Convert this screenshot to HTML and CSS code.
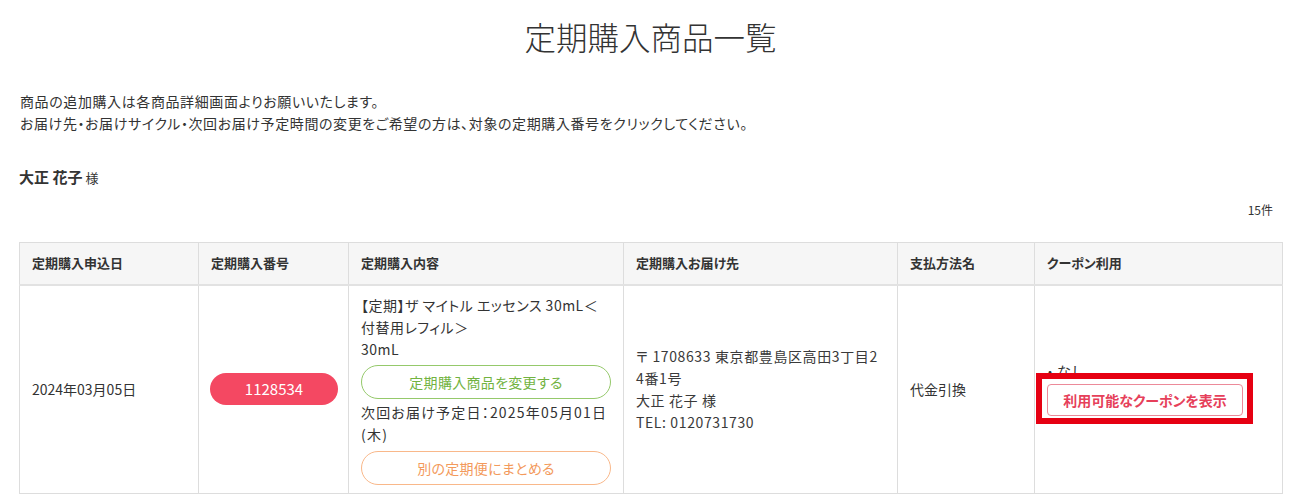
FILE: index.html
```html
<!DOCTYPE html>
<html lang="ja">
<head>
<meta charset="utf-8">
<title>定期購入商品一覧</title>
<link rel="stylesheet" href="styles.css">
</head>
<body>
<div class="page">
  <h1 class="title">定期購入商品一覧</h1>
  <div class="intro">
    <p>商品の追加購入は各商品詳細画面よりお願いいたします。</p>
    <p>お届け先・お届けサイクル・次回お届け予定時間の変更をご希望の方は、対象の定期購入番号をクリックしてください。</p>
  </div>
  <div class="customer"><span class="name">大正 花子</span><span class="sama">様</span></div>
  <div class="count">15件</div>
  <table class="list">
    <colgroup>
      <col class="c1"><col class="c2"><col class="c3"><col class="c4"><col class="c5"><col class="c6">
    </colgroup>
    <thead>
      <tr>
        <th>定期購入申込日</th>
        <th>定期購入番号</th>
        <th>定期購入内容</th>
        <th>定期購入お届け先</th>
        <th>支払方法名</th>
        <th>クーポン利用</th>
      </tr>
    </thead>
    <tbody>
      <tr>
        <td>2024年03月05日</td>
        <td><a class="pill" href="#">1128534</a></td>
        <td class="content">
          <div>【定期】ザ マイトル エッセンス 30mL＜付替用レフィル＞</div>
          <div>30mL</div>
          <a class="obtn green" href="#">定期購入商品を変更する</a>
          <div class="next">次回お届け予定日：2025年05月01日(木)</div>
          <a class="obtn orange" href="#">別の定期便にまとめる</a>
        </td>
        <td class="addr">〒 1708633 東京都豊島区高田3丁目24番1号<br>大正 花子 様<br>TEL: 0120731730</td>
        <td>代金引換</td>
        <td class="coupon">
          <div class="none">・なし</div>
          <span class="highlight"><a class="cbtn" href="#">利用可能なクーポンを表示</a></span>
        </td>
      </tr>
    </tbody>
  </table>
</div>
</body>
</html>
```

FILE: styles.css
```css
* { box-sizing: border-box; }
html, body { margin: 0; padding: 0; background: #fff; }
body {
  font-family: "Noto Sans CJK JP", "Noto Sans", sans-serif;
  color: #333;
  font-size: 14px;
  line-height: 22px;
  font-feature-settings: "palt";
}
.page { padding: 0 13px 0 19px; }
.title {
  margin: 0;
  padding-top: 14px;
  height: 70px;
  text-align: center;
  font-size: 31.5px;
  line-height: 44px;
  font-weight: 300;
  color: #333;
  font-feature-settings: normal;
}
.intro { margin-top: 20px; padding-left: 1px; }
.intro p { margin: 0; font-size: 14px; line-height: 22px; letter-spacing: 0.6px; }
.customer { margin-top: 31px; height: 24px; line-height: 24px; }
.customer .name { font-size: 15px; font-weight: 700; }
.customer .sama { font-size: 13px; margin-left: 3px; }
.count {
  margin-top: 12px;
  text-align: right;
  font-size: 12px;
  line-height: 18px;
  padding-right: 9px;
}
.list {
  margin-top: 23px;
  width: 1263px;
  border-collapse: collapse;
  table-layout: fixed;
}
.c1 { width: 179px; }
.c2 { width: 150px; }
.c3 { width: 275px; }
.c4 { width: 274px; }
.c5 { width: 137px; }
.c6 { width: 248px; }
.list th {
  background: #f6f6f6;
  border: 1px solid #ddd;
  border-bottom: 2px solid #e2e2e2;
  height: 42px;
  padding: 0 12px;
  text-align: left;
  font-size: 13px;
  font-weight: 700;
}
.list td {
  border: 1px solid #ddd;
  padding: 8px 12px;
  vertical-align: middle;
  font-size: 14px;
  line-height: 22px;
}
.pill {
  display: block;
  width: 128px;
  height: 32px;
  line-height: 32px;
  border-radius: 16px;
  background: #f44862;
  color: #fff;
  text-align: center;
  text-decoration: none;
  font-size: 15px;
  margin-left: -1px;
}
.content { letter-spacing: 0.5px; }
.obtn {
  display: block;
  width: 250px;
  height: 34px;
  line-height: 32px;
  border-radius: 17px;
  text-align: center;
  text-decoration: none;
  font-size: 14px;
  letter-spacing: 0.3px;
}
.green { border: 1px solid #95c96b; color: #72b33f; margin: 5px 0 2px; }
.orange { border: 1px solid #f9b88a; color: #f39a5c; margin-top: 6px; }
.next { letter-spacing: 1.2px; }
.addr { color: #3a3a3a; letter-spacing: 0.62px; word-break: break-all; }
.list td.coupon { padding-top: 10px; }
.none {
  position: relative;
  top: -3px;
  line-height: 20px;
  font-feature-settings: normal;
  margin-left: -4px;
}
.highlight {
  display: block;
  position: relative;
  width: 196px;
}
.highlight::after {
  content: "";
  position: absolute;
  top: -11px;
  bottom: -8px;
  left: -11px;
  right: -10px;
  border: 6px solid #e60012;
  pointer-events: none;
}
.cbtn {
  display: block;
  width: 196px;
  height: 32px;
  line-height: 30px;
  border: 1px solid #ec8a99;
  border-radius: 4px;
  color: #e6405a;
  text-align: center;
  text-decoration: none;
  font-size: 14px;
  font-weight: 700;
}
```
